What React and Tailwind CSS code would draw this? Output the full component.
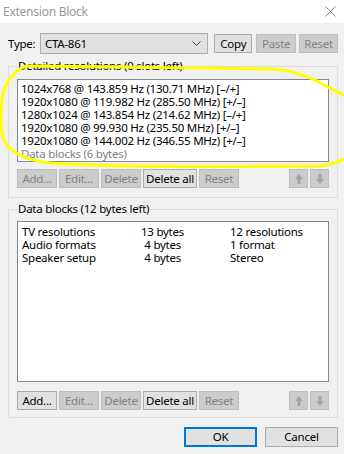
import React from "react";

function Btn({ children, disabled, className = "" }) {
  const look = disabled
    ? "bg-[#cccccc] border-[#bfbfbf] text-[#838383]"
    : "bg-[#e1e1e1] border-[#adadad] text-black";
  return (
    <div className={`flex items-center justify-center border leading-none whitespace-nowrap ${look} ${className}`}>
      {children}
    </div>
  );
}

function Arrow({ down }) {
  return (
    <svg width="8" height="10" viewBox="0 0 8 10" className={down ? "rotate-180" : ""}>
      <path d="M4 0 L8 5 L5.5 5 L5.5 10 L2.5 10 L2.5 5 L0 5 Z" fill="#a3a3a3" />
    </svg>
  );
}

function ButtonRow({ addEnabled }) {
  return (
    <div className="flex items-center justify-between">
      <div className="flex gap-[2px]">
        <Btn disabled={!addEnabled} className="w-[40px] h-[19px]">Add...</Btn>
        <Btn disabled className="w-[40px] h-[19px]">Edit...</Btn>
        <Btn disabled className="w-[40px] h-[19px]">Delete</Btn>
        <Btn className="w-[54px] h-[19px]">Delete all</Btn>
        <Btn disabled className="w-[40px] h-[19px]">Reset</Btn>
      </div>
      <div className="flex gap-[2px]">
        <Btn disabled className="w-[19px] h-[19px]"><Arrow /></Btn>
        <Btn disabled className="w-[19px] h-[19px]"><Arrow down /></Btn>
      </div>
    </div>
  );
}

export default function App() {
  const res = [
    "1024x768 @ 143.859 Hz (130.71 MHz) [–/+]",
    "1920x1080 @ 119.982 Hz (285.50 MHz) [+/–]",
    "1280x1024 @ 143.854 Hz (214.62 MHz) [–/+]",
    "1920x1080 @ 99.930 Hz (235.50 MHz) [+/–]",
    "1920x1080 @ 144.002 Hz (346.55 MHz) [+/–]",
  ];
  const blocks = [
    ["TV resolutions", "13 bytes", "12 resolutions"],
    ["Audio formats", "4 bytes", "1 format"],
    ["Speaker setup", "4 bytes", "Stereo"],
  ];
  return (
    <div className="relative w-[344px] h-[454px] overflow-hidden bg-[#f0f0f0] text-[11.5px] tracking-[-0.25px] text-black whitespace-nowrap font-['Noto_Sans',sans-serif]">
      {/* title bar */}
      <div className="h-[23px] bg-white flex items-center justify-between pl-[3px] pr-[8px]">
        <span className="text-[12px] text-[#999999]">Extension Block</span>
        <svg width="11" height="11" viewBox="0 0 11 11">
          <path d="M0.5 0.5 L10.5 10.5 M10.5 0.5 L0.5 10.5" stroke="#8a8a8a" strokeWidth="1" />
        </svg>
      </div>

      <div className="pl-[8px] pr-[6px]">
        {/* type row */}
        <div className="mt-[10px] h-[21px] flex items-center">
          <span className="w-[32px]">Type:</span>
          <div className="w-[169px] h-[21px] border border-[#adadad] bg-[#e1e1e1] flex items-center justify-between pl-[4px] pr-[6px]">
            <span>CTA-861</span>
            <svg width="9" height="5" viewBox="0 0 9 5">
              <path d="M0.5 0.5 L4.5 4.5 L8.5 0.5" stroke="#444" strokeWidth="1" fill="none" />
            </svg>
          </div>
          <Btn className="ml-[6px] w-[38px] h-[19px]">Copy</Btn>
          <Btn disabled className="ml-[4px] w-[40px] h-[19px]">Paste</Btn>
          <Btn disabled className="ml-[3px] w-[39px] h-[19px]">Reset</Btn>
        </div>

        {/* detailed resolutions */}
        <fieldset className="mt-[5px] border border-[#dcdcdc] px-[8px] pb-[9px]">
          <legend className="px-[1px] leading-[14px]">Detailed resolutions (0 slots left)</legend>
          <div className="mt-[6px] h-[83px] border border-[#828790] bg-white pl-[3px] pt-[2px] leading-[13px]">
            {res.map((r) => (
              <div key={r}>{r}</div>
            ))}
            <div className="text-[#808080]">Data blocks (6 bytes)</div>
          </div>
          <div className="mt-[7px]">
            <ButtonRow addEnabled={false} />
          </div>
        </fieldset>

        {/* data blocks */}
        <fieldset className="mt-[4px] border border-[#dcdcdc] px-[8px] pb-[7px]">
          <legend className="px-[1px] leading-[14px]">Data blocks (12 bytes left)</legend>
          <div className="mt-[5px] h-[161px] border border-[#828790] bg-white pl-[4px] pt-[3px] leading-[13px]">
            {blocks.map(([a, b, c]) => (
              <div key={a} className="flex">
                <span className="w-[119px]">{a}</span>
                <span className="w-[40px] text-right">{b}</span>
                <span className="ml-[49px]">{c}</span>
              </div>
            ))}
          </div>
          <div className="mt-[9px]">
            <ButtonRow addEnabled />
          </div>
        </fieldset>

        {/* dialog buttons */}
        <div className="mt-[9px] flex justify-end gap-[8px]">
          <div className="w-[73px] h-[20px] border-2 border-[#0078d7] bg-[#e1e1e1] flex items-center justify-center leading-none">OK</div>
          <Btn className="w-[73px] h-[20px]">Cancel</Btn>
        </div>
      </div>

      {/* yellow hand-drawn annotation */}
      <svg className="absolute left-0 top-0 pointer-events-none" width="344" height="454" viewBox="0 0 344 454">
        <path
          d="M27 66 C18 68, 8 78, 4 90 C0 105, 0 125, 3 138 C8 152, 25 160, 50 163 C100 167, 200 167, 320 166 C332 165, 340 161, 346 158"
          stroke="#ffff00" strokeWidth="3" fill="none" strokeLinecap="round" strokeLinejoin="round"
        />
        <path
          d="M27 66 L120 67 L270 69 C290 70, 300 74, 315 80 C325 86, 335 91, 346 96"
          stroke="#ffff00" strokeWidth="3" fill="none" strokeLinecap="round" strokeLinejoin="round"
        />
      </svg>
    </div>
  );
}
